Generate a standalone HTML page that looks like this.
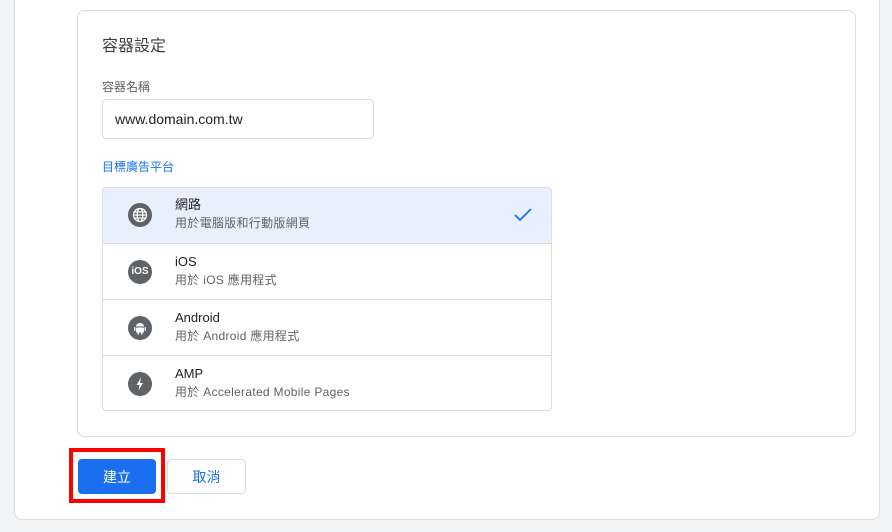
<!DOCTYPE html>
<html><head><meta charset="utf-8"><style>
*{box-sizing:border-box;margin:0;padding:0}
body{width:892px;height:532px;background:#f1f3f4;position:relative;overflow:hidden;font-family:"Liberation Sans","Noto Sans CJK TC",sans-serif;color:#202124}
div{line-height:16px}
.panel{position:absolute;left:14px;top:-10px;width:866px;height:530px;background:#fff;border:1px solid #dadce0;border-radius:8px}
.card{position:absolute;left:77px;top:10px;width:779px;height:427px;border:1px solid #dadce0;border-radius:8px;background:#fff}
.t{position:absolute;left:102px;top:37px;font-size:16px;line-height:20px;color:#3c4043}
.lbl{position:absolute;left:102px;top:79px;font-size:12px;color:#5f6368}
.inp{position:absolute;left:102px;top:99px;width:272px;height:40px;border:1px solid #dadce0;border-radius:4px;font-size:14px;padding:11px 12px;color:#202124}
.blue{position:absolute;left:102px;top:159px;font-size:12px;color:#1a73e8}
.list{position:absolute;left:102px;top:187px;width:450px;height:224px;border:1px solid #dadce0;border-radius:4px;overflow:hidden}
.row{position:absolute;left:0;width:448px;height:56px;border-top:1px solid #dadce0}
.row .ic{position:absolute;left:25px;top:16px;width:24px;height:24px;border-radius:50%;background:#5f6368}
.row .n{position:absolute;left:72px;top:10px;font-size:13px;color:#202124}
.row .d{position:absolute;left:72px;top:28px;font-size:12px;color:#5f6368;letter-spacing:.3px}
.red{position:absolute;left:69px;top:448px;width:96px;height:55px;border:4px solid #f00}
.b1{position:absolute;left:78px;top:459px;width:78px;height:35px;background:#1a6ef0;border-radius:4px;color:#fff;font-size:14px;text-align:center;line-height:37px}
.b2{position:absolute;left:167px;top:459px;width:79px;height:35px;border:1px solid #dadce0;border-radius:4px;color:#1a73e8;font-size:14px;text-align:center;line-height:35px;background:#fff}
</style></head><body>
<div class="panel"></div>
<div class="card"></div>
<div class="t">容器設定</div>
<div class="lbl">容器名稱</div>
<div class="inp">www.domain.com.tw</div>
<div class="blue">目標廣告平台</div>
<div class="list">
<div class="row" style="top:-1px;background:#e8f0fe;border-top:none">
<div class="ic"><svg width="24" height="24" viewBox="0 0 24 24" fill="none" stroke="#fff" stroke-width="1.3"><circle cx="12" cy="12" r="6.5"/><ellipse cx="12" cy="12" rx="2.8" ry="6.5"/><path d="M5.5 12h13M6.5 9h11M6.5 15h11"/></svg></div>
<div class="n">網路</div><div class="d">用於電腦版和行動版網頁</div>
<svg style="position:absolute;left:410px;top:20px" width="20" height="16" viewBox="0 0 20 16"><path d="M2 8l5 5 11-11" fill="none" stroke="#1a73e8" stroke-width="1.8"/></svg>
</div>
<div class="row" style="top:55px"><div class="ic" style="color:#fff;font-size:10px;font-weight:bold;text-align:center;line-height:24px">iOS</div><div class="n">iOS</div><div class="d">用於 iOS 應用程式</div></div>
<div class="row" style="top:111px"><div class="ic"><svg width="24" height="24" viewBox="0 0 24 24" fill="#fff"><path d="M8 10.5a4 3.5 0 0 1 8 0z"/><rect x="8" y="11.5" width="8" height="5" rx="1"/><rect x="6" y="11" width="1.4" height="4" rx=".7"/><rect x="16.6" y="11" width="1.4" height="4" rx=".7"/><rect x="9.5" y="16" width="1.4" height="2.5"/><rect x="13.1" y="16" width="1.4" height="2.5"/></svg></div><div class="n">Android</div><div class="d">用於 Android 應用程式</div></div>
<div class="row" style="top:167px"><div class="ic"><svg width="24" height="24" viewBox="0 0 24 24" fill="#fff"><path d="M13 5.5L8.5 13h3l-1 5.5 4.5-7.5h-3z"/></svg></div><div class="n">AMP</div><div class="d">用於 Accelerated Mobile Pages</div></div>
</div>
<div class="red"></div>
<div class="b1">建立</div>
<div class="b2">取消</div>
</body></html>
